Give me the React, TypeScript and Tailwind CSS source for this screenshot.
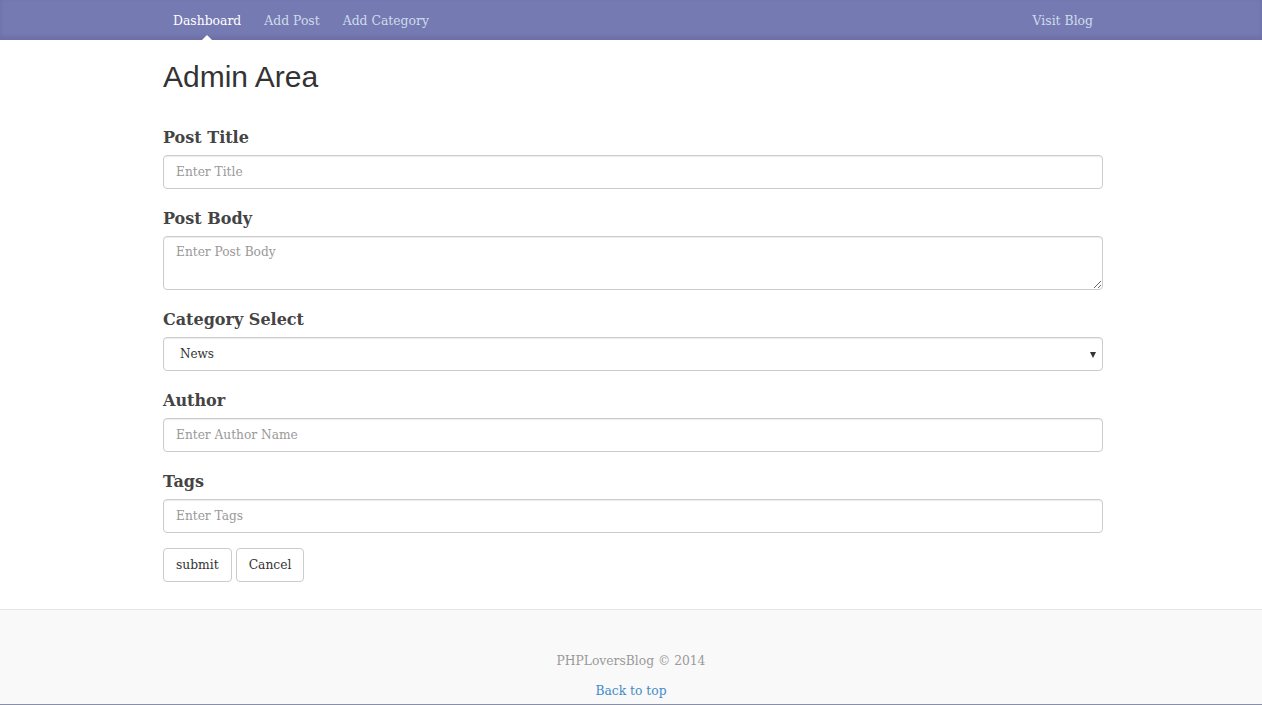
import { useState } from 'react';

const serif = { fontFamily: '"DejaVu Serif", "Liberation Serif", serif' };

export default function App() {
    const [category, setCategory] = useState('News');

    const inputClass =
        'block w-full h-[34px] px-3 rounded border border-[#ccc] text-[12.2px] text-[#555] placeholder:text-[#999] shadow-[inset_0_1px_1px_rgba(0,0,0,0.075)] outline-none';
    const labelClass = 'block mt-[2px] text-[16px] font-bold text-[#444] leading-[20px] mb-[7px]';

    return (
        <div className="min-h-[705px] flex flex-col bg-white" style={serif}>
            <div className="h-10 bg-[#767ab3] border-b border-[#6c70a6] shadow-[inset_0_-2px_5px_rgba(0,0,0,0.1)]">
                <div className="flex justify-center pl-1">
                    <nav className="w-[940px] flex items-center gap-[3px] h-10 text-[12.4px]">
                        <a className="relative px-[10px] pt-[2px] h-10 flex items-center text-white">
                            Dashboard
                            <span className="absolute bottom-0 left-1/2 -ml-[5px] w-0 h-0 border-x-[5px] border-x-transparent border-b-[5px] border-b-white" />
                        </a>
                        <a className="px-[10px] pt-[2px] h-10 flex items-center text-[#cdddeb]">Add Post</a>
                        <a className="px-[10px] pt-[2px] h-10 flex items-center text-[#cdddeb]">Add Category</a>
                        <a className="ml-auto px-[10px] pt-[2px] h-10 flex items-center text-[#cdddeb]">Visit Blog</a>
                    </nav>
                </div>
            </div>

            <div className="flex justify-center pl-1">
                <main className="w-[940px]">
                    <h1 className="mt-[17px] text-[30px] leading-[40px] text-[#333]" style={{ fontFamily: '"Liberation Sans", Arial, sans-serif' }}>
                        Admin Area
                    </h1>
                    <form className="mt-[29px] flex flex-col gap-[18px]" onSubmit={e => e.preventDefault()}>
                        <div>
                            <label className={labelClass}>Post Title</label>
                            <input className={inputClass} placeholder="Enter Title" style={serif} />
                        </div>
                        <div>
                            <label className={labelClass}>Post Body</label>
                            <textarea className="block w-full h-[54px] px-3 py-[6px] rounded border border-[#ccc] text-[12.2px] text-[#555] placeholder:text-[#999] shadow-[inset_0_1px_1px_rgba(0,0,0,0.075)] outline-none" placeholder="Enter Post Body" style={serif} />
                        </div>
                        <div>
                            <label className={labelClass}>Category Select</label>
                            <div className="relative">
                                <select
                                    value={category}
                                    onChange={e => setCategory(e.target.value)}
                                    className="block w-full h-[34px] pl-4 pr-8 rounded border border-[#ccc] text-[12px] text-[#333] bg-white appearance-none shadow-[inset_0_1px_1px_rgba(0,0,0,0.075)] outline-none"
                                    style={serif}
                                >
                                    <option>News</option>
                                    <option>Events</option>
                                    <option>Tutorials</option>
                                </select>
                                <span className="pointer-events-none absolute right-[7px] top-[15px] w-0 h-0 border-x-[3.5px] border-x-transparent border-t-[6px] border-t-[#333]" />
                            </div>
                        </div>
                        <div>
                            <label className={labelClass}>Author</label>
                            <input className={inputClass} placeholder="Enter Author Name" style={serif} />
                        </div>
                        <div className="-mb-[3px]">
                            <label className={labelClass}>Tags</label>
                            <input className={inputClass} placeholder="Enter Tags" style={serif} />
                        </div>
                        <div className="flex gap-1">
                            <button className="h-[34px] px-3 rounded border border-[#ccc] bg-white text-[12.3px] text-[#333]">submit</button>
                            <button type="button" className="h-[34px] px-3 rounded border border-[#ccc] bg-white text-[12.3px] text-[#333]">Cancel</button>
                        </div>
                    </form>
                </main>
            </div>

            <footer className="mt-[27px] flex-1 bg-[#f9f9f9] border-t border-[#e5e5e5] border-b border-b-[#8a8fa8] text-center pt-[41px] text-[12.3px]">
                <p className="text-[#999] leading-[20px]">PHPLoversBlog © 2014</p>
                <p className="mt-[10px] leading-[20px]">
                    <a className="text-[#428bca]">Back to top</a>
                </p>
            </footer>
        </div>
    );
}
